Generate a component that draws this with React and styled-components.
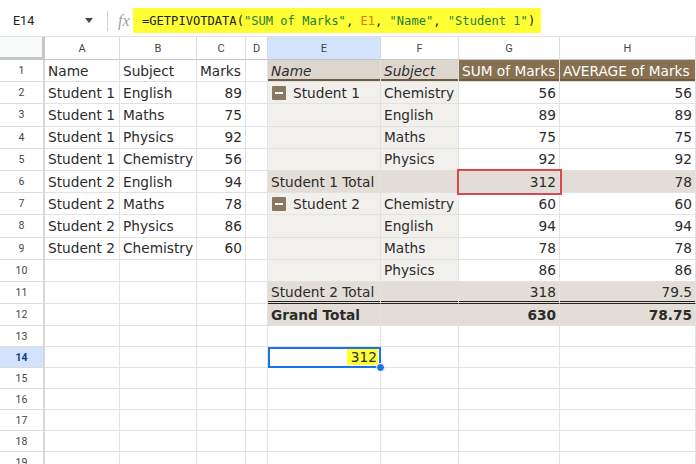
import React from "react";
import styled, { createGlobalStyle } from "styled-components";

const GlobalStyle = createGlobalStyle`
  html, body {
    margin: 0;
    padding: 0;
    background: #fff;
    overflow: hidden;
  }
  body {
    font-family: "DejaVu Sans", Verdana, sans-serif;
  }
`;

const COLUMNS = [
  { key: "A", width: 75 },
  { key: "B", width: 77 },
  { key: "C", width: 49 },
  { key: "D", width: 22 },
  { key: "E", width: 113 },
  { key: "F", width: 78 },
  { key: "G", width: 101 },
  { key: "H", width: 136 },
];

const ROW_COUNT = 19;
const SELECTED_COL = "E";
const SELECTED_ROW = 14;

const LEFT = [
  ["Name", "Subject", "Marks"],
  ["Student 1", "English", 89],
  ["Student 1", "Maths", 75],
  ["Student 1", "Physics", 92],
  ["Student 1", "Chemistry", 56],
  ["Student 2", "English", 94],
  ["Student 2", "Maths", 78],
  ["Student 2", "Physics", 86],
  ["Student 2", "Chemistry", 60],
];

const item = (name, subject, v) => [
  { t: name, tone: "label", minus: !!name },
  { t: subject, tone: "label" },
  { t: v, align: "right" },
  { t: v, align: "right" },
];

const total = (label, sum, avg, more = {}) => [
  { t: label, tone: "total", ...more },
  { t: "", tone: "total", ...more },
  { t: sum, tone: "total", align: "right", ...more },
  { t: avg, tone: "total", align: "right", ...more },
];

const PIVOT = {
  1: [
    { t: "Name", tone: "head", italic: true, edge: "brown" },
    { t: "Subject", tone: "head", italic: true, edge: "brown" },
    { t: "SUM of Marks", tone: "dark", edge: "brown" },
    { t: "AVERAGE of Marks", tone: "dark", edge: "brown" },
  ],
  2: item("Student 1", "Chemistry", 56),
  3: item("", "English", 89),
  4: item("", "Maths", 75),
  5: item("", "Physics", 92),
  6: total("Student 1 Total", 312, 78),
  7: item("Student 2", "Chemistry", 60),
  8: item("", "English", 94),
  9: item("", "Maths", 78),
  10: item("", "Physics", 86),
  11: total("Student 2 Total", 318, 79.5, { edge: "double" }),
  12: total("Grand Total", 630, 78.75, { bold: true }),
};

// the red box in the reference sits on G6
PIVOT[6][2].flag = "red";

const FORMULA = [
  ["=GETPIVOTDATA(", "plain"],
  ['"SUM of Marks"', "str"],
  [", ", "plain"],
  ["E1", "ref"],
  [", ", "plain"],
  ['"Name"', "str"],
  [", ", "plain"],
  ['"Student 1"', "str"],
  [")", "plain"],
];

function buildRow(r) {
  const cells = COLUMNS.map(() => ({}));
  const l = LEFT[r - 1];
  if (l) {
    cells[0] = { t: l[0] };
    cells[1] = { t: l[1] };
    cells[2] = { t: l[2], align: typeof l[2] === "number" ? "right" : "left" };
  }
  const p = PIVOT[r];
  if (p) p.forEach((c, i) => (cells[4 + i] = c));
  if (r === SELECTED_ROW) cells[4] = { t: 312, align: "right", flag: "select", mark: true };
  return cells;
}

export default function App() {
  const rows = Array.from({ length: ROW_COUNT }, (_, i) => i + 1);

  return (
    <Page>
      <GlobalStyle />
      <FormulaBar>
        <NameBox>
          <span>E14</span>
          <Caret viewBox="0 0 8 5">
            <path d="M0 0h8L4 5z" />
          </Caret>
        </NameBox>
        <Divider />
        <Fx>fx</Fx>
        <FormulaInput>
          {FORMULA.map(([text, kind], i) => (
            <Token key={i} $kind={kind}>
              {text}
            </Token>
          ))}
        </FormulaInput>
      </FormulaBar>

      <Sheet>
        <Corner />
        {COLUMNS.map((c) => (
          <ColHeader key={c.key} $active={c.key === SELECTED_COL}>
            {c.key}
          </ColHeader>
        ))}

        {rows.map((r) => (
          <React.Fragment key={r}>
            <RowHeader $active={r === SELECTED_ROW}>{r}</RowHeader>
            {buildRow(r).map((c, i) => (
              <Cell
                key={i}
                $align={c.align}
                $tone={c.tone}
                $italic={c.italic}
                $bold={c.bold}
                $edge={c.edge}
                $flag={c.flag}
              >
                {c.minus && (
                  <Minus>
                    <span />
                  </Minus>
                )}
                {c.mark ? <Marked>{c.t}</Marked> : c.t}
                {c.flag === "select" && <Handle />}
              </Cell>
            ))}
          </React.Fragment>
        ))}
      </Sheet>
    </Page>
  );
}

//styles

const TONES = {
  head: "#dcd6ce",
  dark: "#86704f",
  label: "#f2f0ed",
  total: "#e2ddd6",
};

const TOKEN_COLORS = {
  plain: "#202124",
  str: "#1e7e34",
  ref: "#e8710a",
};

const Page = styled.div`
  display: flex;
  flex-direction: column;
  width: 696px;
  height: 464px;
  overflow: hidden;
`;

const FormulaBar = styled.div`
  display: flex;
  flex-shrink: 0;
  align-items: center;
  height: 36px;
  box-sizing: border-box;
  padding: 5px 0 0 13px;
  font-family: Roboto, "Liberation Sans", sans-serif;
`;

const NameBox = styled.div`
  display: flex;
  align-items: center;
  justify-content: space-between;
  width: 80px;
  font-size: 12.5px;
  color: #202124;
`;

const Caret = styled.svg`
  width: 8px;
  height: 5px;
  fill: #444746;
`;

const Divider = styled.div`
  width: 1px;
  height: 20px;
  margin-left: 14px;
  background: #d0d0d0;
`;

const Fx = styled.div`
  margin-left: 10px;
  width: 14px;
  font-family: "Liberation Serif", serif;
  font-style: italic;
  font-size: 16px;
  color: #a0a0a0;
`;

const FormulaInput = styled.div`
  display: flex;
  align-items: center;
  height: 25px;
  margin-left: 1px;
  padding: 0 6px 0 9px;
  background: #ffff33;
  font-family: "DejaVu Sans Mono", "Liberation Mono", monospace;
  font-size: 12.1px;
  white-space: pre;
`;

const Token = styled.span`
  color: ${({ $kind }) => TOKEN_COLORS[$kind]};
`;

const Sheet = styled.div`
  display: grid;
  flex-shrink: 0;
  grid-template-columns: 45px ${COLUMNS.map((c) => `${c.width}px`).join(" ")};
  grid-template-rows: 23px repeat(12, 22.2px) repeat(7, 21px);
  border-top: 1px solid #e1e3e1;
`;

const Corner = styled.div`
  background: #f8f9fa;
  box-shadow: inset -3px -3px 0 #c4c7c5;
`;

const ColHeader = styled.div`
  display: flex;
  align-items: center;
  justify-content: center;
  font-family: Roboto, "Liberation Sans", sans-serif;
  font-size: 11px;
  color: #444746;
  background: ${({ $active }) => ($active ? "#d3e3fd" : "#fff")};
  border-right: 1px solid #dadce0;
  border-bottom: 1px solid #c4c7c5;
`;

const RowHeader = styled.div`
  display: flex;
  align-items: center;
  justify-content: center;
  font-family: Roboto, "Liberation Sans", sans-serif;
  font-size: 10.5px;
  font-weight: ${({ $active }) => ($active ? 700 : 400)};
  color: ${({ $active }) => ($active ? "#0b3d91" : "#444746")};
  background: ${({ $active }) => ($active ? "#d3e3fd" : "#fff")};
  border-right: 2px solid #d5d7d8;
  border-bottom: 1px solid #dadce0;
`;

const edgeShadow = ({ $edge, $tone }) => {
  if ($edge === "brown") return "inset 0 -2px 0 #6f5b40";
  if ($edge === "double") return `inset 0 -1px 0 ${TONES[$tone] || "#fff"}, inset 0 -2px 0 #222`;
  return "none";
};

const Cell = styled.div`
  position: relative;
  display: flex;
  align-items: center;
  justify-content: ${({ $align }) => ($align === "right" ? "flex-end" : "flex-start")};
  min-width: 0;
  padding: 0 3px;
  font-size: 13.7px;
  white-space: nowrap;
  color: ${({ $tone }) => ($tone === "dark" ? "#fff" : "#2b2b2b")};
  background: ${({ $tone }) => TONES[$tone] || "#fff"};
  font-style: ${({ $italic }) => ($italic ? "italic" : "normal")};
  font-weight: ${({ $bold }) => ($bold ? 700 : 400)};
  border-right: 1px solid #e2e2e2;
  border-bottom: 1px solid ${({ $edge }) => ($edge === "double" ? "#222" : "#e2e2e2")};
  box-shadow: ${edgeShadow};
  outline: ${({ $flag }) =>
    $flag === "red" ? "2px solid #e0474c" : $flag === "select" ? "2px solid #1a73e8" : "none"};
  outline-offset: ${({ $flag }) => ($flag === "select" ? "-2px" : "0")};
  z-index: ${({ $flag }) => ($flag ? 1 : "auto")};
`;

const Minus = styled.span`
  display: flex;
  align-items: center;
  justify-content: center;
  width: 14px;
  height: 14px;
  margin: 0 7px 0 1px;
  border-radius: 1px;
  background: #8a7762;

  span {
    width: 8px;
    height: 2px;
    background: #fff;
  }
`;

const Marked = styled.span`
  display: flex;
  align-items: center;
  align-self: stretch;
  margin: 2px -1px 2px 0;
  padding: 0 1px 0 4px;
  background: #ffff33;
`;

const Handle = styled.span`
  position: absolute;
  right: -5px;
  bottom: -5px;
  width: 7px;
  height: 7px;
  border-radius: 50%;
  background: #1a73e8;
  border: 1px solid #fff;
`;
